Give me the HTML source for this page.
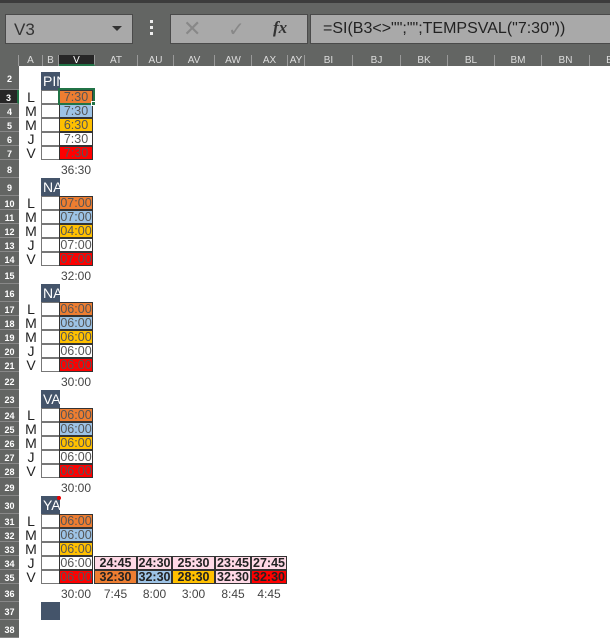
<!DOCTYPE html>
<html><head><meta charset="utf-8"><style>
*{margin:0;padding:0;box-sizing:border-box}
body{width:610px;height:636px;overflow:hidden;background:#fff;font-family:"Liberation Sans",sans-serif;position:relative}
.a{position:absolute}
.tb{left:0;top:0;width:610px;height:66px;background:#636563}
.top{left:0;top:0;width:610px;height:3px;background:#3c3c3c}
.nb{left:5px;top:14px;width:128px;height:30px;background:#a9a9a9;border:1px solid #4a4a4a;font-size:17px;color:#333;padding:5px 0 0 8px}
.fb1{left:170px;top:14px;width:138px;height:30px;background:#a9a9a9;border:1px solid #4a4a4a}
.fx{left:310px;top:14px;width:300px;height:30px;background:#a9a9a9;border:1px solid #4a4a4a;border-right:none;font-size:16px;color:#222;padding:5px 0 0 12px;white-space:nowrap}
.ch{top:55px;height:11px;font-size:10px;color:#ddd;text-align:center;line-height:11px;border-right:1px solid #999}
.rh{left:0;width:19px;background:#636563;color:#fff;font-size:9px;font-weight:bold;text-align:center;border-bottom:1px solid #888}
.c{height:14px;font-size:12.5px;color:#555;text-align:center;line-height:13px;border:1px solid #333}
.lb{left:22px;width:18px;font-size:14px;color:#222;text-align:center;height:14px;line-height:14px}
.hd{left:41px;width:19px;height:18px;background:#44546a;color:#fff;font-size:14px;line-height:18px;overflow:hidden;white-space:nowrap;padding-left:2px}
.t{font-size:12px;color:#444;text-align:center;height:14px;line-height:14px}
</style></head><body>
<div class="a tb"></div><div class="a top"></div>
<div class="a nb">V3<span style="position:absolute;right:10px;top:11px;border-left:5px solid transparent;border-right:5px solid transparent;border-top:5px solid #333"></span></div>
<div class="a" style="left:150px;top:20px;width:3px;height:18px;background:repeating-linear-gradient(#eee 0 3px,transparent 3px 6px)"></div>
<div class="a fb1"><span class="a" style="left:12px;top:1px;font-size:22px;color:#888">✕</span><span class="a" style="left:57px;top:2px;font-size:20px;color:#888">✓</span><span class="a" style="left:102px;top:3px;font-size:17px;font-style:italic;font-weight:bold;font-family:'Liberation Serif',serif;color:#333">fx</span></div>
<div class="a fx">=SI(B3&lt;&gt;"";"";TEMPSVAL("7:30"))</div>
<div id="g"></div>
<script>
var h='';
var cols=[["",0,19],["A",19,43],["B",43,59],["V",59,95],["AT",95,138],["AU",138,174],["AV",174,215],["AW",215,252],["AX",252,288],["AY",288,305],["BI",305,353],["BJ",353,401],["BK",401,448],["BL",448,495],["BM",495,542],["BN",542,590],["B",590,630]];
cols.forEach(function(c){var st=c[0]=="V"?'background:#262626;color:#fff;border-bottom:2px solid #217346;':'';h+='<div class="a ch" style="left:'+c[1]+'px;width:'+(c[2]-c[1])+'px;'+st+'">'+c[0]+'</div>';});
function rh(n,top,ht,sel){h+='<div class="a rh" style="top:'+top+'px;height:'+ht+'px;line-height:'+(ht+2)+'px;'+(sel?'background:#262626;border-right:2px solid #217346':'')+'">'+n+'</div>';}
rh(2,66,24);
var names=["PIN","NA","NA","VA","YA"],vals=[["7:30","7:30","6:30","7:30","7:30"],["07:00","07:00","04:00","07:00","07:00"],["06:00","06:00","06:00","06:00","06:00"],["06:00","06:00","06:00","06:00","06:00"],["06:00","06:00","06:00","06:00","06:00"]],tot=["36:30","32:00","30:00","30:00","30:00"],days="LMMJV",bg=["#ed7d31","#9dc3e6","#ffc000","#fff","#ff0000"];
for(var k=0;k<5;k++){var b=72+106*k;var r0=2+7*k;
 if(k>0)rh(r0,b,18);
 h+='<div class="a hd" style="top:'+b+'px">'+names[k]+'</div>';
 for(var i=0;i<5;i++){var y=90+106*k+14*i;rh(r0+1+i,y,14,k==0&&i==0);
  h+='<div class="a lb" style="top:'+y+'px">'+days[i]+'</div>';
  h+='<div class="a c" style="left:41px;top:'+y+'px;width:19px;border-color:#777;background:#fff"></div>';
  h+='<div class="a c" style="left:59px;top:'+y+'px;width:34px;background:'+bg[i]+'">'+vals[k][i]+'</div>';}
 var ty=160+106*k;rh(r0+6,ty,18);
 h+='<div class="a t" style="left:59px;top:'+(ty+3)+'px;width:34px">'+tot[k]+'</div>';}
rh(37,602,18);rh(38,620,18);
h+='<div class="a hd" style="top:602px;height:18px"></div>';
h+='<div class="a" style="left:58px;top:88px;width:37px;height:17px;border:2px solid #217346"></div><div class="a" style="left:91px;top:101px;width:5px;height:5px;background:#217346;border:1px solid #fff"></div>';
h+='<div class="a" style="left:57px;top:496px;width:4px;height:4px;background:#e00;border-radius:2px"></div>';
var xs=[[94,137],[137,172],[172,215],[215,251],[251,287]],r34=["24:45","24:30","25:30","23:45","27:45"],r35=["32:30","32:30","28:30","32:30","32:30"],b35=["#ed7d31","#9dc3e6","#ffc000","#ffd9e6","#ff0000"],r36=["7:45","8:00","3:00","8:45","4:45"];
for(var j=0;j<5;j++){var w=xs[j][1]-xs[j][0];
 h+='<div class="a c" style="left:'+xs[j][0]+'px;top:556px;width:'+w+'px;background:#ffd9e6;font-weight:bold;color:#222">'+r34[j]+'</div>';
 h+='<div class="a c" style="left:'+xs[j][0]+'px;top:570px;width:'+w+'px;background:'+b35[j]+';font-weight:bold;color:#222">'+r35[j]+'</div>';
 h+='<div class="a t" style="left:'+xs[j][0]+'px;top:587px;width:'+w+'px">'+r36[j]+'</div>';}
document.getElementById('g').innerHTML=h;
</script>
</body></html>
